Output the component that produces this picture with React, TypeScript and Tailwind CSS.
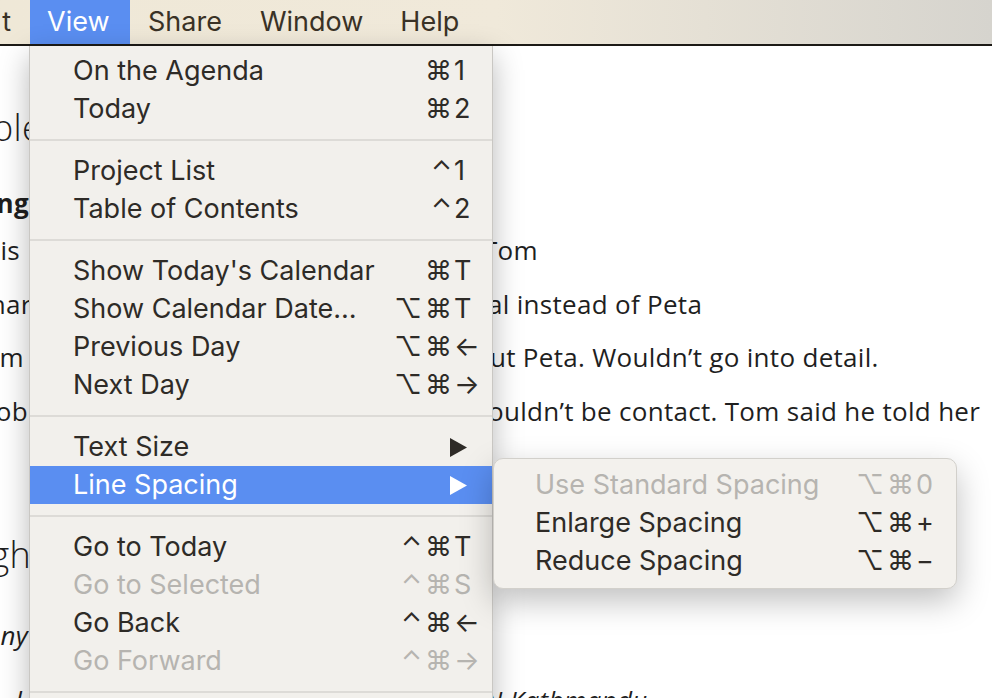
import React from "react";

type Item =
  | { kind: "sep" }
  | {
      kind: "item";
      label: string;
      mods?: string[];
      keyc?: string;
      disabled?: boolean;
      submenu?: boolean;
      active?: boolean;
    };

const items: Item[] = [
  { kind: "item", label: "On the Agenda", mods: ["⌘"], keyc: "1" },
  { kind: "item", label: "Today", mods: ["⌘"], keyc: "2" },
  { kind: "sep" },
  { kind: "item", label: "Project List", mods: ["⌃"], keyc: "1" },
  { kind: "item", label: "Table of Contents", mods: ["⌃"], keyc: "2" },
  { kind: "sep" },
  { kind: "item", label: "Show Today's Calendar", mods: ["⌘"], keyc: "T" },
  { kind: "item", label: "Show Calendar Date…", mods: ["⌥", "⌘"], keyc: "T" },
  { kind: "item", label: "Previous Day", mods: ["⌥", "⌘"], keyc: "←" },
  { kind: "item", label: "Next Day", mods: ["⌥", "⌘"], keyc: "→" },
  { kind: "sep" },
  { kind: "item", label: "Text Size", submenu: true },
  { kind: "item", label: "Line Spacing", submenu: true, active: true },
  { kind: "sep" },
  { kind: "item", label: "Go to Today", mods: ["⌃", "⌘"], keyc: "T" },
  { kind: "item", label: "Go to Selected", mods: ["⌃", "⌘"], keyc: "S", disabled: true },
  { kind: "item", label: "Go Back", mods: ["⌃", "⌘"], keyc: "←" },
  { kind: "item", label: "Go Forward", mods: ["⌃", "⌘"], keyc: "→", disabled: true },
  { kind: "sep" },
  { kind: "item", label: "Show Sidebar", mods: ["⌃", "⌘"], keyc: "S" },
];

const sub = [
  { label: "Use Standard Spacing", mods: ["⌥", "⌘"], keyc: "0", disabled: true },
  { label: "Enlarge Spacing", mods: ["⌥", "⌘"], keyc: "+" },
  { label: "Reduce Spacing", mods: ["⌥", "⌘"], keyc: "−" },
];

function Triangle({ white }: { white?: boolean }) {
  return (
    <svg width="17" height="19" viewBox="0 0 17 19">
      <polygon points="0,0 17,9.5 0,19" fill={white ? "#ffffff" : "#2e2b27"} />
    </svg>
  );
}

function Sep() {
  return (
    <div className="h-[24px] flex items-center">
      <div className="h-[2px] w-full bg-[#dddbd7]" />
    </div>
  );
}

function Mods({ mods }: { mods?: string[] }) {
  return (
    <span className="w-[64px] shrink-0 flex justify-end gap-[3px] whitespace-nowrap">
      {(mods ?? []).map((m, i) => (
        <span key={i}>{m}</span>
      ))}
    </span>
  );
}

function MenuRow({ it }: { it: Extract<Item, { kind: "item" }> }) {
  const color = it.active
    ? "text-white bg-[#5a8ef1]"
    : it.disabled
    ? "text-[#b6b4b0]"
    : "text-[#2e2b27]";
  return (
    <div className={`flex items-center h-[38px] pl-[43px] pr-[12px] ${color}`}>
      <span className="flex-1 min-w-0 whitespace-nowrap">{it.label}</span>
      {it.submenu ? (
        <span className="w-[30px] shrink-0 flex justify-start">
          <Triangle white={it.active} />
        </span>
      ) : (
        <span className="flex items-center shrink-0">
          <Mods mods={it.mods} />
          <span className="w-[28px] pl-[2px] whitespace-nowrap">{it.keyc}</span>
        </span>
      )}
    </div>
  );
}

function DocLine({
  left,
  leftEnd,
  right,
  rightStart,
  mt,
  h,
  cls,
}: {
  left: string;
  leftEnd: number;
  right?: string;
  rightStart?: number;
  mt: number;
  h: number;
  cls: string;
}) {
  return (
    <div className={`flex items-center whitespace-nowrap ${cls}`} style={{ marginTop: mt, height: h }}>
      <span className="flex justify-end shrink-0" style={{ width: leftEnd }}>
        <span>{left}</span>
      </span>
      {right ? (
        <span className="shrink-0" style={{ marginLeft: (rightStart ?? 0) - leftEnd }}>
          {right}
        </span>
      ) : null}
    </div>
  );
}

export default function App() {
  return (
    <div className="relative w-[992px] h-[698px] overflow-hidden bg-white font-['Inter','DejaVu_Sans',sans-serif]">
      {/* Menu bar */}
      <div className="h-[46px] flex items-stretch bg-gradient-to-r from-[#efe8d7] via-[#f0e9da] to-[#d6d4ce] border-b-2 border-[#1c1a16] text-[27px] text-[#3a3226]">
        <div className="w-[30px] flex items-center justify-end overflow-hidden">
          <span className="mr-[19px]">t</span>
        </div>
        <div className="w-[100px] flex items-center pl-[17px] bg-[#5a8ef1] text-white">View</div>
        <div className="flex items-center pl-[18px]">Share</div>
        <div className="flex items-center pl-[38px]">Window</div>
        <div className="flex items-center pl-[37px]">Help</div>
      </div>

      {/* Document */}
      <div className="font-['Open_Sans','Lato',sans-serif] text-[#1f1f1f] text-[26px] tracking-[0.3px]">
        <DocLine left="People" leftEnd={42} mt={62} h={40} cls="text-[36px] font-light" />
        <DocLine left="Meeting" leftEnd={29} mt={40} h={30} cls="font-bold" />
        <DocLine left="This is" leftEnd={20} right="Tom" rightStart={483} mt={17} h={30} cls="" />
        <DocLine left="Richard" leftEnd={48} right="al instead of Peta" rightStart={488} mt={24} h={30} cls="" />
        <DocLine left="From" leftEnd={24} right="ut Peta. Wouldn’t go into detail." rightStart={490} mt={23} h={30} cls="" />
        <DocLine left="Rob" leftEnd={28} right="ouldn’t be contact. Tom said he told her" rightStart={488} mt={24} h={30} cls="" />
        <DocLine left="High" leftEnd={31} mt={109} h={40} cls="text-[36px] font-light" />
        <DocLine left="Tony" leftEnd={28} mt={45} h={30} cls="italic" />
        <DocLine left="l" leftEnd={22} right="N Kathmandu" rightStart={484} mt={35} h={30} cls="italic" />
      </div>

      {/* View menu */}
      <div className="absolute left-[29px] top-[46px] w-[464px] h-[700px] pt-[6px] bg-[#f2f0ec] border-x border-[#c9c7c3] shadow-[0_10px_28px_rgba(0,0,0,0.28)] text-[27px]">
        {items.map((it, i) =>
          it.kind === "sep" ? <Sep key={i} /> : <MenuRow key={i} it={it} />
        )}
      </div>

      {/* Submenu */}
      <div className="absolute left-[493px] top-[458px] w-[464px] h-[131px] pt-[7px] rounded-[10px] bg-[#f3f1ed] border border-[#d2d0cb] shadow-[0_12px_32px_rgba(0,0,0,0.25)] text-[27px]">
        {sub.map((s, i) => (
          <div
            key={i}
            className={`flex items-center h-[38px] pl-[41px] pr-[18px] ${
              s.disabled ? "text-[#b6b4b0]" : "text-[#2e2b27]"
            }`}
          >
            <span className="flex-1 min-w-0 whitespace-nowrap">{s.label}</span>
            <Mods mods={s.mods} />
            <span className="w-[24px] shrink-0 pl-[2px]">{s.keyc}</span>
          </div>
        ))}
      </div>
    </div>
  );
}
